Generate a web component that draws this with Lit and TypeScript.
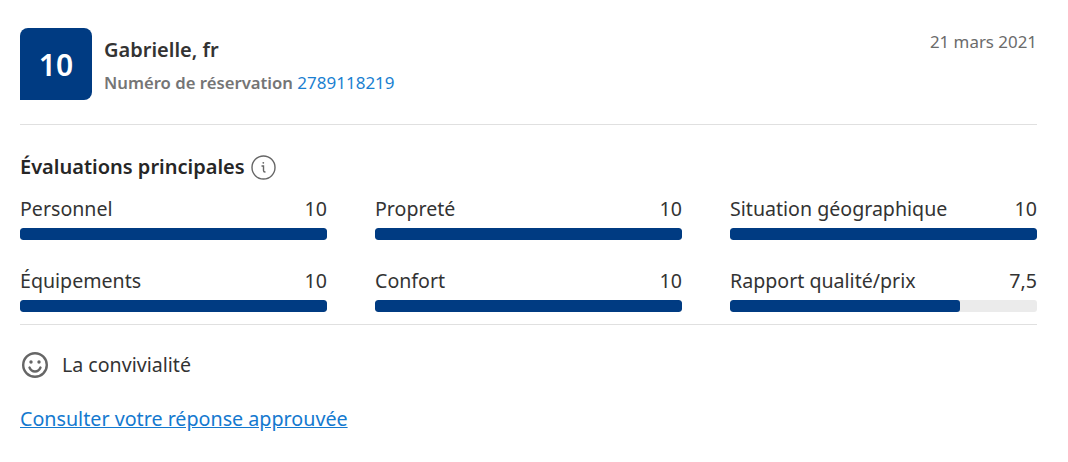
import { LitElement, html, css } from "lit";
import { customElement } from "lit/decorators.js";

const scores: [string, string, number][] = [
  ["Personnel", "10", 100], ["Propreté", "10", 100], ["Situation géographique", "10", 100],
  ["Équipements", "10", 100], ["Confort", "10", 100], ["Rapport qualité/prix", "7,5", 75],
];

@customElement("app-root")
export class AppRoot extends LitElement {
  static styles = css`
    :host { display: block; width: 1068px; height: 462px; background: #fff; font-family: "Noto Sans", "Open Sans", sans-serif; color: #333; box-sizing: border-box; }
    .wrap { margin: 0 31px 0 20px; padding-top: 28px; }
    .head { display: flex; gap: 12px; height: 96px; border-bottom: 1px solid #e0e0e0; }
    .badge { width: 72px; height: 72px; background: #003b82; color: #fff; border-radius: 8px 8px 8px 0; display: flex; align-items: center; justify-content: center; font-size: 30px; font-weight: 600; }
    .who { flex: 1; }
    .name { font-size: 20px; font-weight: 600; color: #333; line-height: 24px; margin-top: 10px; }
    .res { font-size: 16.7px; line-height: 22px; margin-top: 10px; color: #757575; font-weight: 600; }
    .res a { color: #1a7fd1; font-size: 17px; font-weight: 400; text-decoration: none; }
    .date { font-size: 16.9px; color: #6b6b6b; line-height: 28px; }
    h2 { margin: 28px 0 0; font-size: 20px; line-height: 28px; font-weight: 600; color: #262626; display: flex; align-items: center; gap: 6px; }
    .grid { display: grid; grid-template-columns: repeat(3, 307px); column-gap: 48px; row-gap: 27px; margin-top: 14px; }
    .row { display: flex; justify-content: space-between; font-size: 19.6px; line-height: 28px; color: #333; }
    .bar { height: 12px; margin-top: 5px; background: #ebebeb; border-radius: 3px; overflow: hidden; }
    .fill { height: 100%; background: #003b82; border-radius: 3px; }
    .sep { height: 1px; background: #e0e0e0; margin-top: 12px; }
    .fun { display: flex; align-items: center; gap: 13px; margin-top: 24px; font-size: 19.6px; line-height: 32px; color: #333; }
    .fun svg { margin-left: 1px; }
    .link { display: inline-block; margin-top: 24px; font-size: 19.7px; line-height: 28px; color: #1479cf; text-decoration: underline; }
  `;
  render() {
    return html`<div class="wrap">
      <div class="head">
        <div class="badge">10</div>
        <div class="who">
          <div class="name">Gabrielle, fr</div>
          <div class="res">Numéro de réservation <a>2789118219</a></div>
        </div>
        <div class="date">21 mars 2021</div>
      </div>
      <h2>Évaluations principales
        <svg width="25" height="25" viewBox="0 0 25 25" fill="none" stroke="#666" stroke-width="1.4"><circle cx="12.500" cy="12.500" r="11.500"/><path d="M11 11h1.500v4.500c0 1 .5 1.500 1.500 1.500" stroke-linecap="round"/><circle cx="12.300" cy="7.800" r=".9" fill="#666" stroke="none"/></svg>
      </h2>
      <div class="grid">
        ${scores.map(([l, v, p]) => html`<div>
          <div class="row"><span>${l}</span><span>${v}</span></div>
          <div class="bar"><div class="fill" style="width:${p}%"></div></div>
        </div>`)}
      </div>
      <div class="sep"></div>
      <div class="fun">
        <svg width="28" height="28" viewBox="0 0 28 28" fill="none" stroke="#666" stroke-width="2.400"><circle cx="14" cy="14" r="11.800"/><path d="M8.500 16.500c1.200 2.800 3.200 4 5.500 4s4.300-1.200 5.500-4" stroke-linecap="round"/><circle cx="10" cy="11" r="1.700" fill="#666" stroke="none"/><circle cx="18" cy="11" r="1.700" fill="#666" stroke="none"/></svg>
        La convivialité
      </div>
      <a class="link">Consulter votre réponse approuvée</a>
    </div>`;
  }
}
